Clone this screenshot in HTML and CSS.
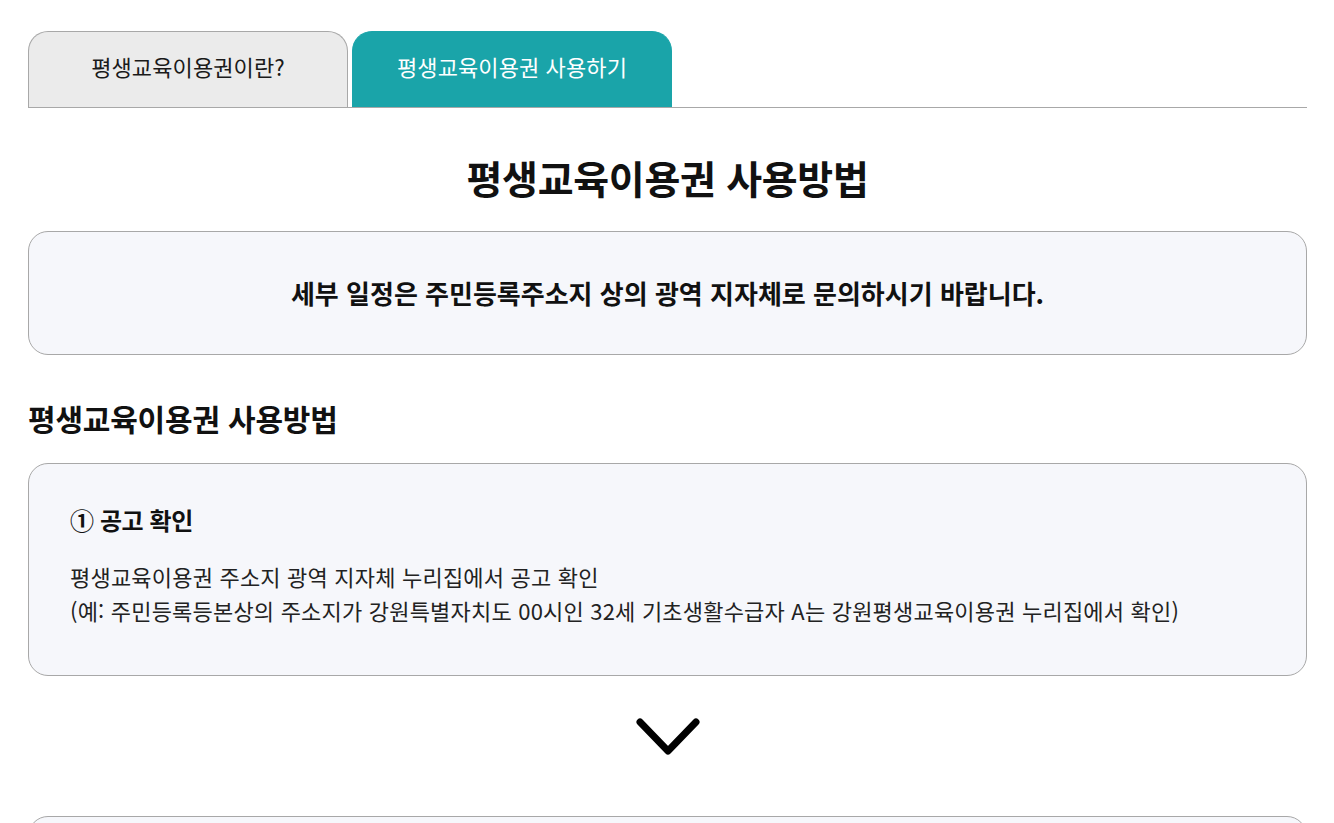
FILE: index.html
```html
<!DOCTYPE html>
<html lang="ko">
<head>
<meta charset="utf-8">
<title>평생교육이용권 사용방법</title>
<link rel="stylesheet" href="styles.css">
</head>
<body>
<div class="page">
  <nav class="tabs">
    <a class="tab">평생교육이용권이란?</a>
    <a class="tab active">평생교육이용권 사용하기</a>
  </nav>
  <h1 class="main-title">평생교육이용권 사용방법</h1>
  <div class="notice">세부 일정은 주민등록주소지 상의 광역 지자체로 문의하시기 바랍니다.</div>
  <h2 class="section-title">평생교육이용권 사용방법</h2>
  <div class="step">
    <h3 class="step-title">① 공고 확인</h3>
    <p class="step-text">평생교육이용권 주소지 광역 지자체 누리집에서 공고 확인<br>(예: 주민등록등본상의 주소지가 강원특별자치도 00시인 32세 기초생활수급자 A는 강원평생교육이용권 누리집에서 확인)</p>
  </div>
  <div class="arrow">
    <svg width="64" height="38" viewBox="0 0 64 38" fill="none"><path d="M4 4 L32 33 L60 4" stroke="#000" stroke-width="7" stroke-linecap="round" stroke-linejoin="round"/></svg>
  </div>
  <div class="step"></div>
</div>
</body>
</html>
```
FILE: styles.css
```css
* { box-sizing: border-box; }
html, body { margin: 0; padding: 0; background: #fff; }
body {
  font-family: "Noto Sans CJK KR", "Noto Sans", sans-serif;
  color: #111;
  overflow: hidden;
  height: 823px;
}
.page {
  padding: 31px 27px 0 28px;
}
.tabs {
  display: flex;
  gap: 4px;
  border-bottom: 1px solid #a8a8a8;
}
.tab {
  width: 320px;
  height: 76px;
  border-radius: 20px 20px 0 0;
  display: flex;
  justify-content: center;
  padding-top: 17px;
  font-size: 22px;
  line-height: 34px;
  letter-spacing: 0.1px;
  color: #1a1a1a;
  background: #ebebeb;
  border: 1px solid #a8a8a8;
  border-bottom: none;
}
.tab.active {
  background: #1aa4a9;
  border-color: #1aa4a9;
  color: #fff;
}
.main-title {
  margin: 38px 0 0;
  text-align: center;
  font-size: 39px;
  font-weight: 700;
  letter-spacing: -0.3px;
  line-height: 62px;
}
.notice {
  margin-top: 23px;
  height: 124px;
  border: 1px solid #a8a8a8;
  border-radius: 20px;
  background: #f6f7fb;
  display: flex;
  align-items: center;
  justify-content: center;
  padding-bottom: 2px;
  font-size: 26px;
  font-weight: 700;
  letter-spacing: 0;
}
.section-title {
  margin: 40px 0 0;
  font-size: 30px;
  font-weight: 700;
  letter-spacing: -0.2px;
  line-height: 46px;
}
.step {
  margin-top: 22px;
  height: 213px;
  border: 1px solid #a8a8a8;
  border-radius: 20px;
  background: #f6f7fb;
  padding: 37px 41px;
}
.step-title {
  margin: 0;
  font-size: 24px;
  font-weight: 700;
  letter-spacing: -0.4px;
  line-height: 38px;
}
.step-text {
  margin: 20px 0 0;
  font-size: 22px;
  line-height: 34px;
  letter-spacing: 0.2px;
  color: #222;
}
.arrow {
  display: flex;
  justify-content: center;
  padding-top: 42px;
  height: 140px;
}
.arrow + .step { margin-top: 0; }
```
